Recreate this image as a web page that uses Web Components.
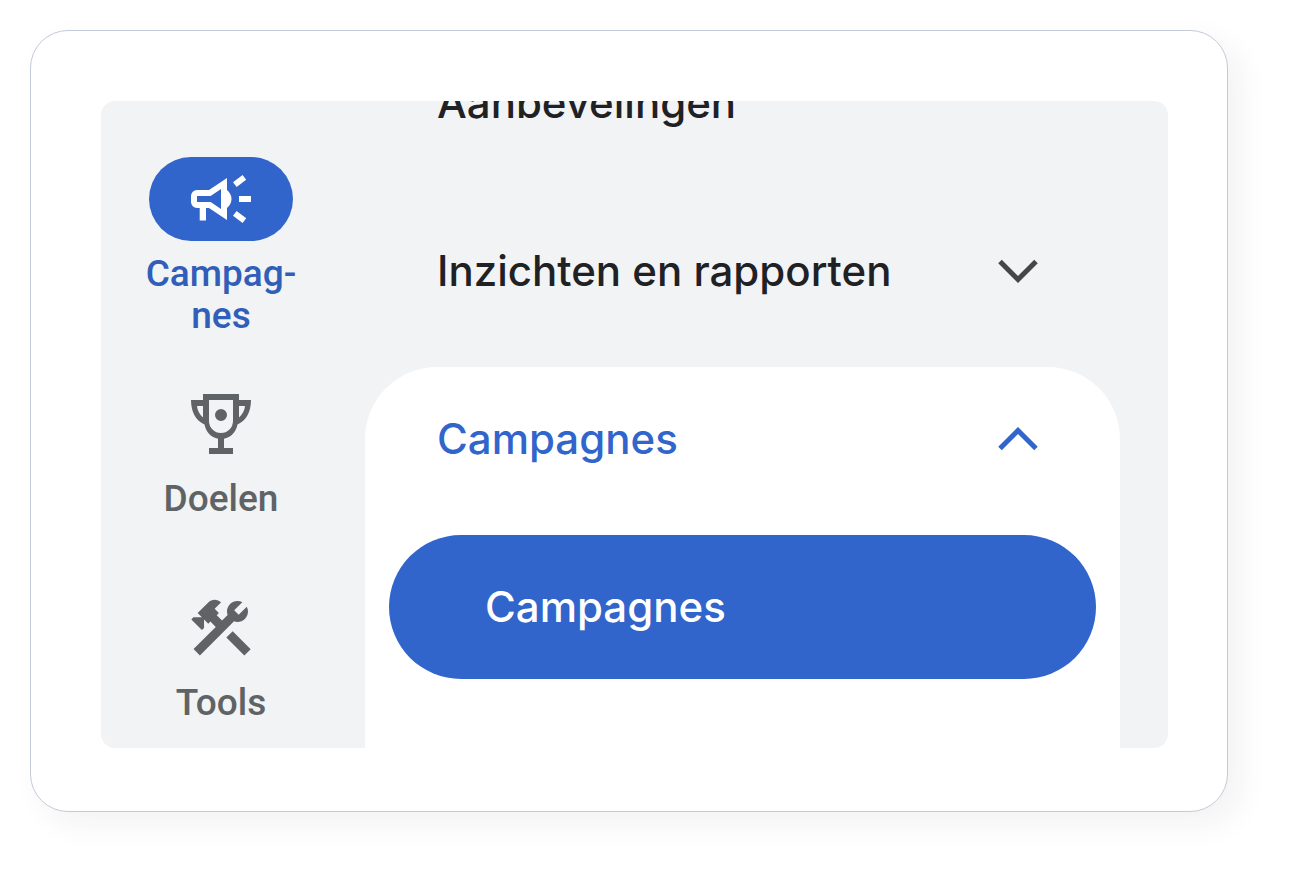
<!DOCTYPE html>
<html lang="nl">
<head>
<meta charset="utf-8">
<meta name="viewport" content="width=device-width, initial-scale=1">
<title>Campagnes</title>
<style>
  body {
    margin: 0;
    background: #fff;
    font-family: Roboto, "Liberation Sans", sans-serif;
    --blue: #3165cb;
    --blue-label: #305eb9;
    --grey: #606366;
    --ink: #202124;
    --surface: #f1f3f4;
    --menu-font: 500 42px/48px Inter, "Liberation Sans", sans-serif;
  }
</style>
</head>
<body>
<framed-card>
  <app-navigation>
    <nav-rail slot="rail">
      <rail-item active>
        <svg slot="icon" viewBox="0 0 24 24" aria-hidden="true"><path fill-rule="evenodd" d="M18 11v2h4v-2zM16 17.61 19.2 20l1.2-1.6L17.2 16zM20.4 5.6 19.2 4 16 6.4 17.2 8zM4 9a2 2 0 0 0-2 2v2a2 2 0 0 0 2 2h.9v4.2H7V15h1l6 4v-4c1-.8 1.5-1.9 1.5-3S15 9.800 14 9V5L8 9zM4 11h4.55L12 8.700v6.600L8.550 13H4z"/></svg>
        Campag-<br>nes
      </rail-item>
      <rail-item>
        <svg slot="icon" viewBox="0 0 24 24" aria-hidden="true"><path fill-rule="evenodd" d="M6 2h12v2h4c0 4-1.600 6.800-4.500 8.200C17 14.800 15.300 16.500 13 16.900V20h3v2H8v-2h3v-3.100C8.700 16.500 7 14.800 6.500 12.200 3.600 10.800 2 8 2 4h4zM8 4v7a4 4 0 0 0 8 0V4zM4 6c.2 1.600.8 2.800 2 3.800V6zM18 6v3.800c1.200-1 1.800-2.200 2-3.800zM12 7a2 2 0 1 1 0 4 2 2 0 0 1 0-4z"/></svg>
        Doelen
      </rail-item>
      <rail-item>
        <svg slot="icon" viewBox="0 0 24 24" aria-hidden="true"><path d="m13.783 15.172 2.121-2.121 5.996 5.996-2.121 2.121zM17.5 10c1.930 0 3.500-1.570 3.500-3.500 0-.58-.16-1.120-.41-1.600l-2.700 2.700-1.490-1.490 2.700-2.700c-.48-.25-1.020-.41-1.600-.41C15.570 3 14 4.570 14 6.500c0 .41.08.8.21 1.160l-1.850 1.850-1.780-1.780.71-.71-1.410-1.410L12 3.490c-1.170-1.170-3.070-1.170-4.240 0L4.220 7.030l1.410 1.410H2.810l-.71.71 3.540 3.540.71-.71V9.150l1.410 1.410.71-.71 1.780 1.780-7.410 7.410 2.120 2.120L16.340 9.790c.36.13.75.21 1.160.21z"/></svg>
        Tools
      </rail-item>
    </nav-rail>
    <nav-menu slot="menu">
      <menu-header>Aanbevelingen</menu-header>
      <menu-header chevron>Inzichten en rapporten</menu-header>
      <menu-group>
        <menu-header slot="header" chevron open>Campagnes</menu-header>
        <menu-link>Campagnes</menu-link>
      </menu-group>
    </nav-menu>
  </app-navigation>
</framed-card>

<script>
  const define = (name, html, setup) => {
    const template = document.createElement("template");
    template.innerHTML = html;
    customElements.define(name, class extends HTMLElement {
      constructor() {
        super();
        this.attachShadow({ mode: "open" }).append(template.content.cloneNode(true));
      }
      connectedCallback() {
        if (setup) setup(this, this.shadowRoot);
      }
    });
  };

  define("framed-card", `
    <style>
      :host {
        display: block;
        box-sizing: border-box;
        margin: 30px 61px 60px 30px;
        padding: 70px 59px 63px 70px;
        background: #fff;
        border: 1px solid #c5cad8;
        border-radius: 38px;
        box-shadow: 12px 12px 32px rgba(30, 40, 50, .06);
      }
    </style>
    <slot></slot>`);

  define("app-navigation", `
    <style>
      :host {
        display: flex;
        overflow: hidden;
        background: var(--surface);
        border-radius: 14px;
      }
      slot[name="rail"]::slotted(*) { flex: 0 0 240px; }
      slot[name="menu"]::slotted(*) { flex: 1; min-width: 0; }
    </style>
    <slot name="rail"></slot>
    <slot name="menu"></slot>`);

  define("nav-rail", `
    <style>
      :host { display: block; }
      nav {
        display: flex;
        flex-direction: column;
        align-items: center;
        gap: 45px;
        padding-top: 56px;
      }
    </style>
    <nav aria-label="Hoofdmenu"><slot></slot></nav>`);

  define("rail-item", `
    <style>
      :host { display: block; min-height: 159px; }
      a {
        display: flex;
        flex-direction: column;
        align-items: center;
        gap: 12px;
        color: var(--grey);
        text-decoration: none;
      }
      .icon {
        display: grid;
        place-items: center;
        width: 144px;
        height: 84px;
        border-radius: 42px;
      }
      ::slotted(svg) { display: block; width: 72px; height: 72px; fill: currentColor; }
      .label {
        font-size: 37px;
        font-weight: 500;
        line-height: 42px;
        text-align: center;
      }
      :host([active]) .icon { background: var(--blue); color: #fff; }
      :host([active]) .label { color: var(--blue-label); }
    </style>
    <a href="#">
      <span class="icon"><slot name="icon"></slot></span>
      <span class="label"><slot></slot></span>
    </a>`);

  define("nav-menu", `
    <style>
      /* The list is scrolled so that its first entry is partly out of view. */
      :host { display: block; margin: -70px 48px 0 24px; }
      nav { display: flex; flex-direction: column; gap: 24px; }
    </style>
    <nav aria-label="Onderdelen"><slot></slot></nav>`);

  define("menu-header", `
    <style>
      :host { display: block; }
      button {
        display: flex;
        align-items: center;
        justify-content: space-between;
        box-sizing: border-box;
        width: 100%;
        height: 144px;
        margin: 0;
        padding: 0 82px 0 72px;
        border: 0;
        background: none;
        color: var(--ink);
        font: var(--menu-font);
        text-align: left;
      }
      svg { display: none; width: 40px; height: 24px; fill: none; stroke: #444648; stroke-width: 5; }
      :host([chevron]) svg { display: block; }
      :host([open]) button { color: var(--blue); }
      :host([open]) svg { stroke: var(--blue); transform: rotate(180deg); }
    </style>
    <button type="button">
      <slot></slot>
      <svg viewBox="0 0 40 24" aria-hidden="true"><path d="M2 2.500 20 20.500 38 2.500"/></svg>
    </button>`, (host, root) => {
      if (host.hasAttribute("chevron")) {
        root.querySelector("button").setAttribute("aria-expanded", host.hasAttribute("open"));
      }
    });

  define("menu-group", `
    <style>
      :host {
        display: block;
        background: #fff;
        border-radius: 72px 72px 0 0;
      }
      .items { padding: 24px 24px 69px; }
    </style>
    <slot name="header"></slot>
    <div class="items"><slot></slot></div>`);

  define("menu-link", `
    <style>
      :host { display: block; }
      a {
        display: flex;
        align-items: center;
        height: 144px;
        padding: 0 96px;
        border-radius: 72px;
        background: var(--blue);
        color: #fff;
        font: var(--menu-font);
        text-decoration: none;
      }
    </style>
    <a href="#" aria-current="page"><slot></slot></a>`);
</script>
</body>
</html>
